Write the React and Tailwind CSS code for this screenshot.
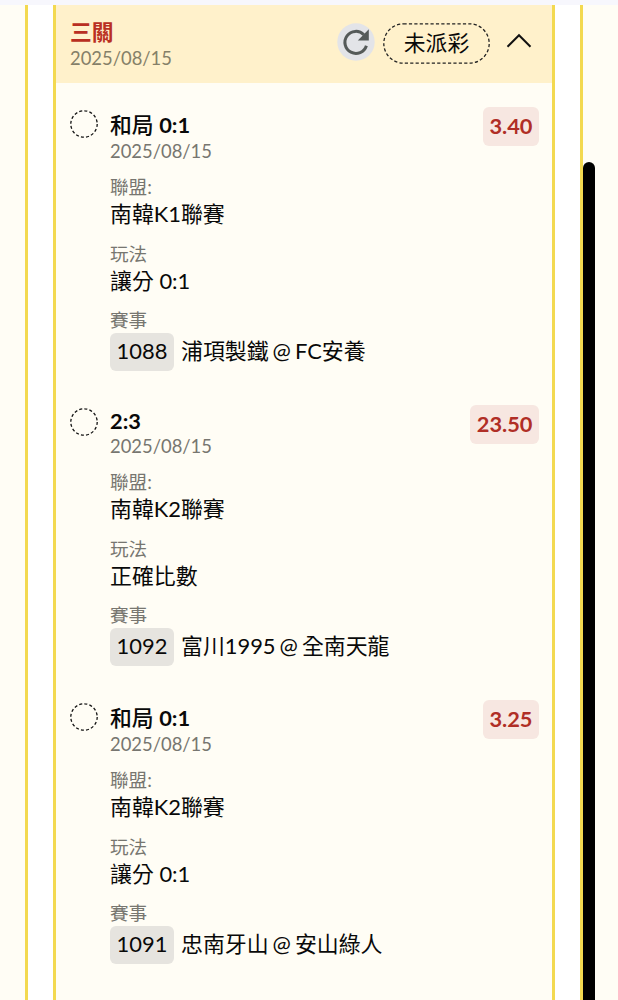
const bets = [
  { draw: '和局', score: '0:1', odds: '3.40', league: '南韓K1聯賽', play: '讓分 0:1', id: '1088', home: '浦項製鐵', away: 'FC安養', size: 'h-[298px]' },
  { draw: '', score: '2:3', odds: '23.50', league: '南韓K2聯賽', play: '正確比數', id: '1092', home: '富川1995', away: '全南天龍', size: 'h-[295px]' },
  { draw: '和局', score: '0:1', odds: '3.25', league: '南韓K2聯賽', play: '讓分 0:1', id: '1091', home: '忠南牙山', away: '安山綠人', size: 'h-[300px]' },
];

function Field({ label, value }) {
  return (
    <div className="mb-[12px]">
      <div className="h-6 text-[18.6px] leading-6 text-[#777670]">{label}</div>
      <div className="h-[31px] text-[21.9px] leading-[30px]">{value}</div>
    </div>
  );
}

function DashedCircle() {
  return (
    <svg className="mt-[2.5px] h-7 w-7 shrink-0" viewBox="0 0 28 28" fill="none">
      <circle cx="14" cy="14" r="13.2" stroke="#111" strokeWidth="1.3" strokeDasharray="3 2.18" />
    </svg>
  );
}

function Bet({ bet }) {
  return (
    <section className={`flex shrink-0 items-start ${bet.size}`}>
      <DashedCircle />
      <div className="ml-[12px] flex-1 whitespace-nowrap">
        <div className={bet.draw ? 'h-[32px] pt-[4px]' : 'h-[29px] pt-[2px]'}>
          <div className="text-[21.8px] font-bold leading-[27px]">
            {bet.draw && <span className="font-medium">{bet.draw} </span>}
            {bet.score}
          </div>
        </div>
        <div className="mb-[12px] h-6 text-[18.4px] leading-6 text-[#777670]">2025/08/15</div>
        <Field label="聯盟:" value={bet.league} />
        <Field label="玩法" value={bet.play} />
        <div className="h-[24px] text-[18.6px] leading-[23px] text-[#777670]">賽事</div>
        <div className="flex h-[38px] items-center text-[21.9px]">
          <span className="flex h-[38px] w-16 items-center justify-center rounded-[6px] bg-[#e6e4df] pb-px">{bet.id}</span>
          <span className="ml-[7px] pb-px">{bet.home}</span>
          <span className="ml-[4px] mr-[4px] pb-px text-[21.9px]">@</span>
          <span className="pb-px">{bet.away}</span>
        </div>
      </div>
      <div className="flex h-[39px] items-center rounded-[6px] bg-[#f7e7e1] px-[6.5px] text-[21.8px] font-bold text-[#b02e26]">{bet.odds}</div>
    </section>
  );
}

export default function App() {
  return (
    <div className="flex h-[1000px] w-[618px] flex-col overflow-hidden bg-[#f7f7fd] pt-[5px] font-['Lato','Noto_Sans_CJK_TC',sans-serif] text-[#090909]">
      <div className="flex min-h-0 flex-1 bg-[#fffdf5]">
        <div className="w-[25px] shrink-0" />
        <div className="flex w-[558px] shrink-0 border-x-[3px] border-[#f3d950] bg-white px-[25px]">
          <main className="flex w-full flex-col border-x-[3px] border-[#f3d950] bg-[#fffdf5]">
            <header className="flex h-[78px] shrink-0 items-start bg-[#fff1cb] pl-[14px] pr-[20px]">
              <div className="flex-1 pt-[13px]">
                <div className="h-[28px] text-[21.8px] font-bold leading-[27px] text-[#b92f22]">三關</div>
                <div className="text-[18.4px] leading-6 text-[#858068]">2025/08/15</div>
              </div>
              <svg className="mt-[18px] h-[38px] w-[38px]" viewBox="0 0 38 38" fill="none">
                <circle cx="19" cy="19" r="18.7" fill="#e3e4e8" />
                <path d="M26.8 11.7A11 11 0 1 0 29.4 22.7" stroke="#555a59" strokeWidth="3" />
                <path d="M31.8 6.3V17.5H20.8Z" fill="#555a59" />
              </svg>
              <div className="relative ml-[8px] mt-[18px] flex h-[41px] w-[107px] items-center justify-center text-[21.8px]">
                <svg className="absolute inset-0" width="107" height="41" fill="none">
                  <rect x="0.8" y="0.8" width="105.4" height="39.4" rx="19.7" stroke="#222" strokeWidth="1.3" strokeDasharray="3.2 2.2" />
                </svg>
                <span>未派彩</span>
              </div>
              <svg className="ml-[16px] mt-[28px] h-4 w-[26px]" viewBox="0 0 26 16" fill="none">
                <path d="M1.5 13.7 13 2.2 24.5 13.7" stroke="#111" strokeWidth="2" />
              </svg>
            </header>
            <div className="flex flex-col pl-[14px] pr-[13px] pt-[24px]">
              {bets.map((bet) => <Bet key={bet.id} bet={bet} />)}
            </div>
          </main>
        </div>
        <div className="mt-[157px] w-[11.5px] rounded-t-full bg-black" />
      </div>
    </div>
  );
}
